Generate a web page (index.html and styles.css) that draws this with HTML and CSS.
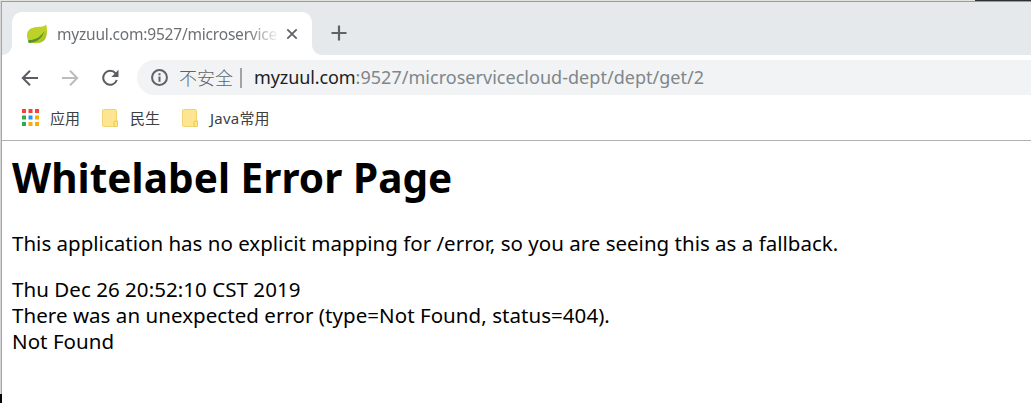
FILE: index.html
```html
<!DOCTYPE html>
<html lang="zh-CN">
<head>
<meta charset="utf-8">
<title>myzuul.com</title>
<link rel="stylesheet" href="styles.css">
</head>
<body>
<div class="backdrop"><div class="backdrop-dark"></div></div>
<div class="window">
  <header class="tabstrip">
    <div class="tab">
      <svg class="leaf" viewBox="0 0 22 20">
        <defs><linearGradient id="leaf-fill" x1="0" y1="0" x2="1" y2="1"><stop offset="0" stop-color="#bfd22c"/><stop offset=".6" stop-color="#bdd126"/><stop offset="1" stop-color="#94b719"/></linearGradient></defs>
        <path fill="url(#leaf-fill)" d="M20.300 .4C18.500 2.500 14.500 2.600 10 3C4 3.700 .9 7 1 11.500C1 15 2 16.600 3 17.800C7 20 13.500 19.700 17.500 17C21.500 13 21.500 7 20.300 .4Z"/>
        <path fill="#539235" d="M3 16.300C9 15.800 14.500 13.500 18.500 7C16.500 14 11 18.200 4 19Z"/>
        <circle cx="3.500" cy="17.500" r="1.400" fill="#539235"/>
      </svg>
      <span class="tab-title">myzuul.com:9527/microservice</span>
      <svg class="close" viewBox="0 0 12 12"><path d="M1.300 1.300 10.700 10.700M10.700 1.300 1.300 10.700"/></svg>
    </div>
    <svg class="plus" viewBox="0 0 16 16"><path d="M8 .5V15.500M.5 8H15.500"/></svg>
  </header>
  <nav class="toolbar">
    <svg class="nav-icon" viewBox="0 0 18 18"><path d="M17 9H2M9 1.800 1.800 9 9 16.200"/></svg>
    <svg class="nav-icon forward" viewBox="0 0 18 18"><path d="M1 9H16M9 1.800 16.200 9 9 16.200"/></svg>
    <svg class="nav-icon reload" viewBox="0 0 18 18"><path d="M15.800 11A7 7 0 1 1 14.600 4.400"/><path class="solid" d="M17.500 .8V8H10.400Z"/></svg>
    <div class="address">
      <svg class="info" viewBox="0 0 16 16"><circle cx="8" cy="8" r="7"/><path d="M8 7V12M8 4V5.900"/></svg>
      <span class="insecure">不安全</span>
      <span class="divider"></span>
      <span class="url"><span class="host">myzuul.com</span>:9527/microservicecloud-dept/dept/get/2</span>
    </div>
  </nav>
  <div class="bookmarks">
    <svg class="apps" viewBox="0 0 17 17">
      <path fill="#f44336" d="M0 0h4v4H0zM6.500 0h4v4h-4zM13 0h4v4h-4z"/>
      <path fill="#34a853" d="M0 6.500h4v4H0zM0 13h4v4H0z"/>
      <path fill="#2196f3" d="M6.500 6.500h4v4h-4z"/>
      <path fill="#fbab09" d="M13 6.500h4v4h-4zM6.500 13h4v4h-4zM13 13h4v4h-4z"/>
    </svg>
    <span class="label label-apps">应用</span>
    <svg class="folder" viewBox="0 0 16 18"><path fill="#ffe591" stroke="#f3d272" d="M.5 1.500q0-1 1-1h12q1 0 1 1v10.500h1v4.500q0 1-1 1h-13q-1 0-1-1z"/><path fill="#ffe591" stroke="#efc84d" d="M14.500 12h-1.500q-1 0-1 1v3.500q0 1 1 1h1.500q1 0 1-1v-4.500z"/></svg>
    <span class="label label-life">民生</span>
    <svg class="folder" viewBox="0 0 16 18"><path fill="#ffe591" stroke="#f3d272" d="M.5 1.500q0-1 1-1h12q1 0 1 1v10.500h1v4.500q0 1-1 1h-13q-1 0-1-1z"/><path fill="#ffe591" stroke="#efc84d" d="M14.500 12h-1.500q-1 0-1 1v3.500q0 1 1 1h1.500q1 0 1-1v-4.500z"/></svg>
    <span class="label label-java">Java常用</span>
  </div>
  <main class="page">
    <h1>Whitelabel Error Page</h1>
    <p>This application has no explicit mapping for /error, so you are seeing this as a fallback.</p>
    <div class="timestamp">Thu Dec 26 20:52:10 CST 2019</div>
    <div class="detail">There was an unexpected error (type=Not Found, status=404).</div>
    <div class="detail">Not Found</div>
  </main>
</div>
<div class="edge-dark"></div>
</body>
</html>
```
FILE: styles.css
```css
* { box-sizing: border-box; }
body {
  position: relative;
  margin: 0;
  width: 1031px;
  height: 403px;
  overflow: hidden;
  background: #d6d6d6;
  font-family: "Noto Sans", "Noto Sans CJK SC", sans-serif;
}
svg { display: block; flex: none; fill: none; }
.backdrop { height: 1px; background: #e3e4e0; }
.backdrop-dark { width: 56px; height: 1px; margin-left: auto; background: #2e2f34; }
.edge-dark { position: absolute; left: 0; bottom: 0; width: 2px; height: 9px; background: #050505; }
.window {
  height: 402px;
  margin-left: 1px;
  border-top: 1px solid #999b9c;
  border-left: 1px solid #a5a5a5;
  background: #fff;
}
.tabstrip {
  display: flex;
  height: 53px;
  padding: 10px 0 0 10px;
  background: #e5e9ec;
}
.tab {
  position: relative;
  display: flex;
  align-items: center;
  width: 300px;
  height: 43px;
  padding-left: 14px;
  border-radius: 10px 10px 0 0;
  background: #fff;
}
.tab::before, .tab::after {
  content: "";
  position: absolute;
  bottom: 0;
  width: 10px;
  height: 10px;
}
.tab::before { left: -10px; background: radial-gradient(circle at 0 0, #e5e9ec 9.500px, #fff 10.300px); }
.tab::after { right: -10px; background: radial-gradient(circle at 100% 0, #e5e9ec 9.500px, #fff 10.300px); }
.leaf { width: 22px; height: 20px; margin-top: 1px; }
.tab-title {
  width: 220px;
  margin: 1px 0 0 9px;
  white-space: nowrap;
  font-size: 15.500px;
  letter-spacing: -.2px;
  line-height: 24px;
  color: #6c6f73;
  -webkit-mask-image: linear-gradient(90deg, #000 190px, rgba(0, 0, 0, .1) 220px);
  mask-image: linear-gradient(90deg, #000 190px, rgba(0, 0, 0, .1) 220px);
}
.close { width: 12px; height: 12px; margin-left: 9px; stroke: #5f6368; stroke-width: 1.800; }
.plus { width: 16px; height: 16px; margin: 13px 0 0 19px; stroke: #5f6368; stroke-width: 2.200; }
.toolbar { display: flex; align-items: center; height: 45px; padding-left: 19px; }
.nav-icon { width: 18px; height: 18px; margin-right: 22px; stroke: #5a5d61; stroke-width: 2; }
.forward { stroke: #bbbcbe; }
.reload { margin-right: 18px; }
.solid { fill: #5a5d61; stroke: none; }
.address {
  display: flex;
  align-items: center;
  flex: 1;
  height: 35px;
  padding-left: 14px;
  border-radius: 18px 0 0 18px;
  background: #f1f3f4;
}
.info { width: 17px; height: 17px; stroke: #5f6368; stroke-width: 1.900; }
.insecure { margin-left: 11px; font-size: 18px; line-height: 26px; font-weight: 300; color: #5f6368; }
.divider { width: 2px; height: 20px; margin-left: 7px; background: #a1a4a7; }
.url { margin-left: 12px; padding-bottom: 1px; font-size: 18px; letter-spacing: .03px; line-height: 26px; white-space: nowrap; color: #80868b; }
.host { letter-spacing: -.1px; color: #202124; }
.bookmarks { display: flex; align-items: center; height: 41px; padding: 0 0 5px 20px; border-bottom: 1px solid #b1b1b1; }
.apps { width: 17px; height: 17px; }
.folder { width: 16px; height: 18px; }
.label { font-size: 15px; line-height: 22px; white-space: nowrap; color: #3c4043; }
.label-apps { margin: 0 22px 0 11px; }
.label-life { margin: 0 22px 0 12px; }
.label-java { margin-left: 12px; letter-spacing: .2px; }
.page { padding: 10px 0 0 10px; font-size: 20.500px; line-height: 26px; white-space: nowrap; color: #000; }
.page h1 { margin: 0; font-size: 40.500px; line-height: 54px; letter-spacing: .05px; }
.page p { margin: 25px 0 20px; letter-spacing: .01px; }
.timestamp, .detail { letter-spacing: .05px; }
```
